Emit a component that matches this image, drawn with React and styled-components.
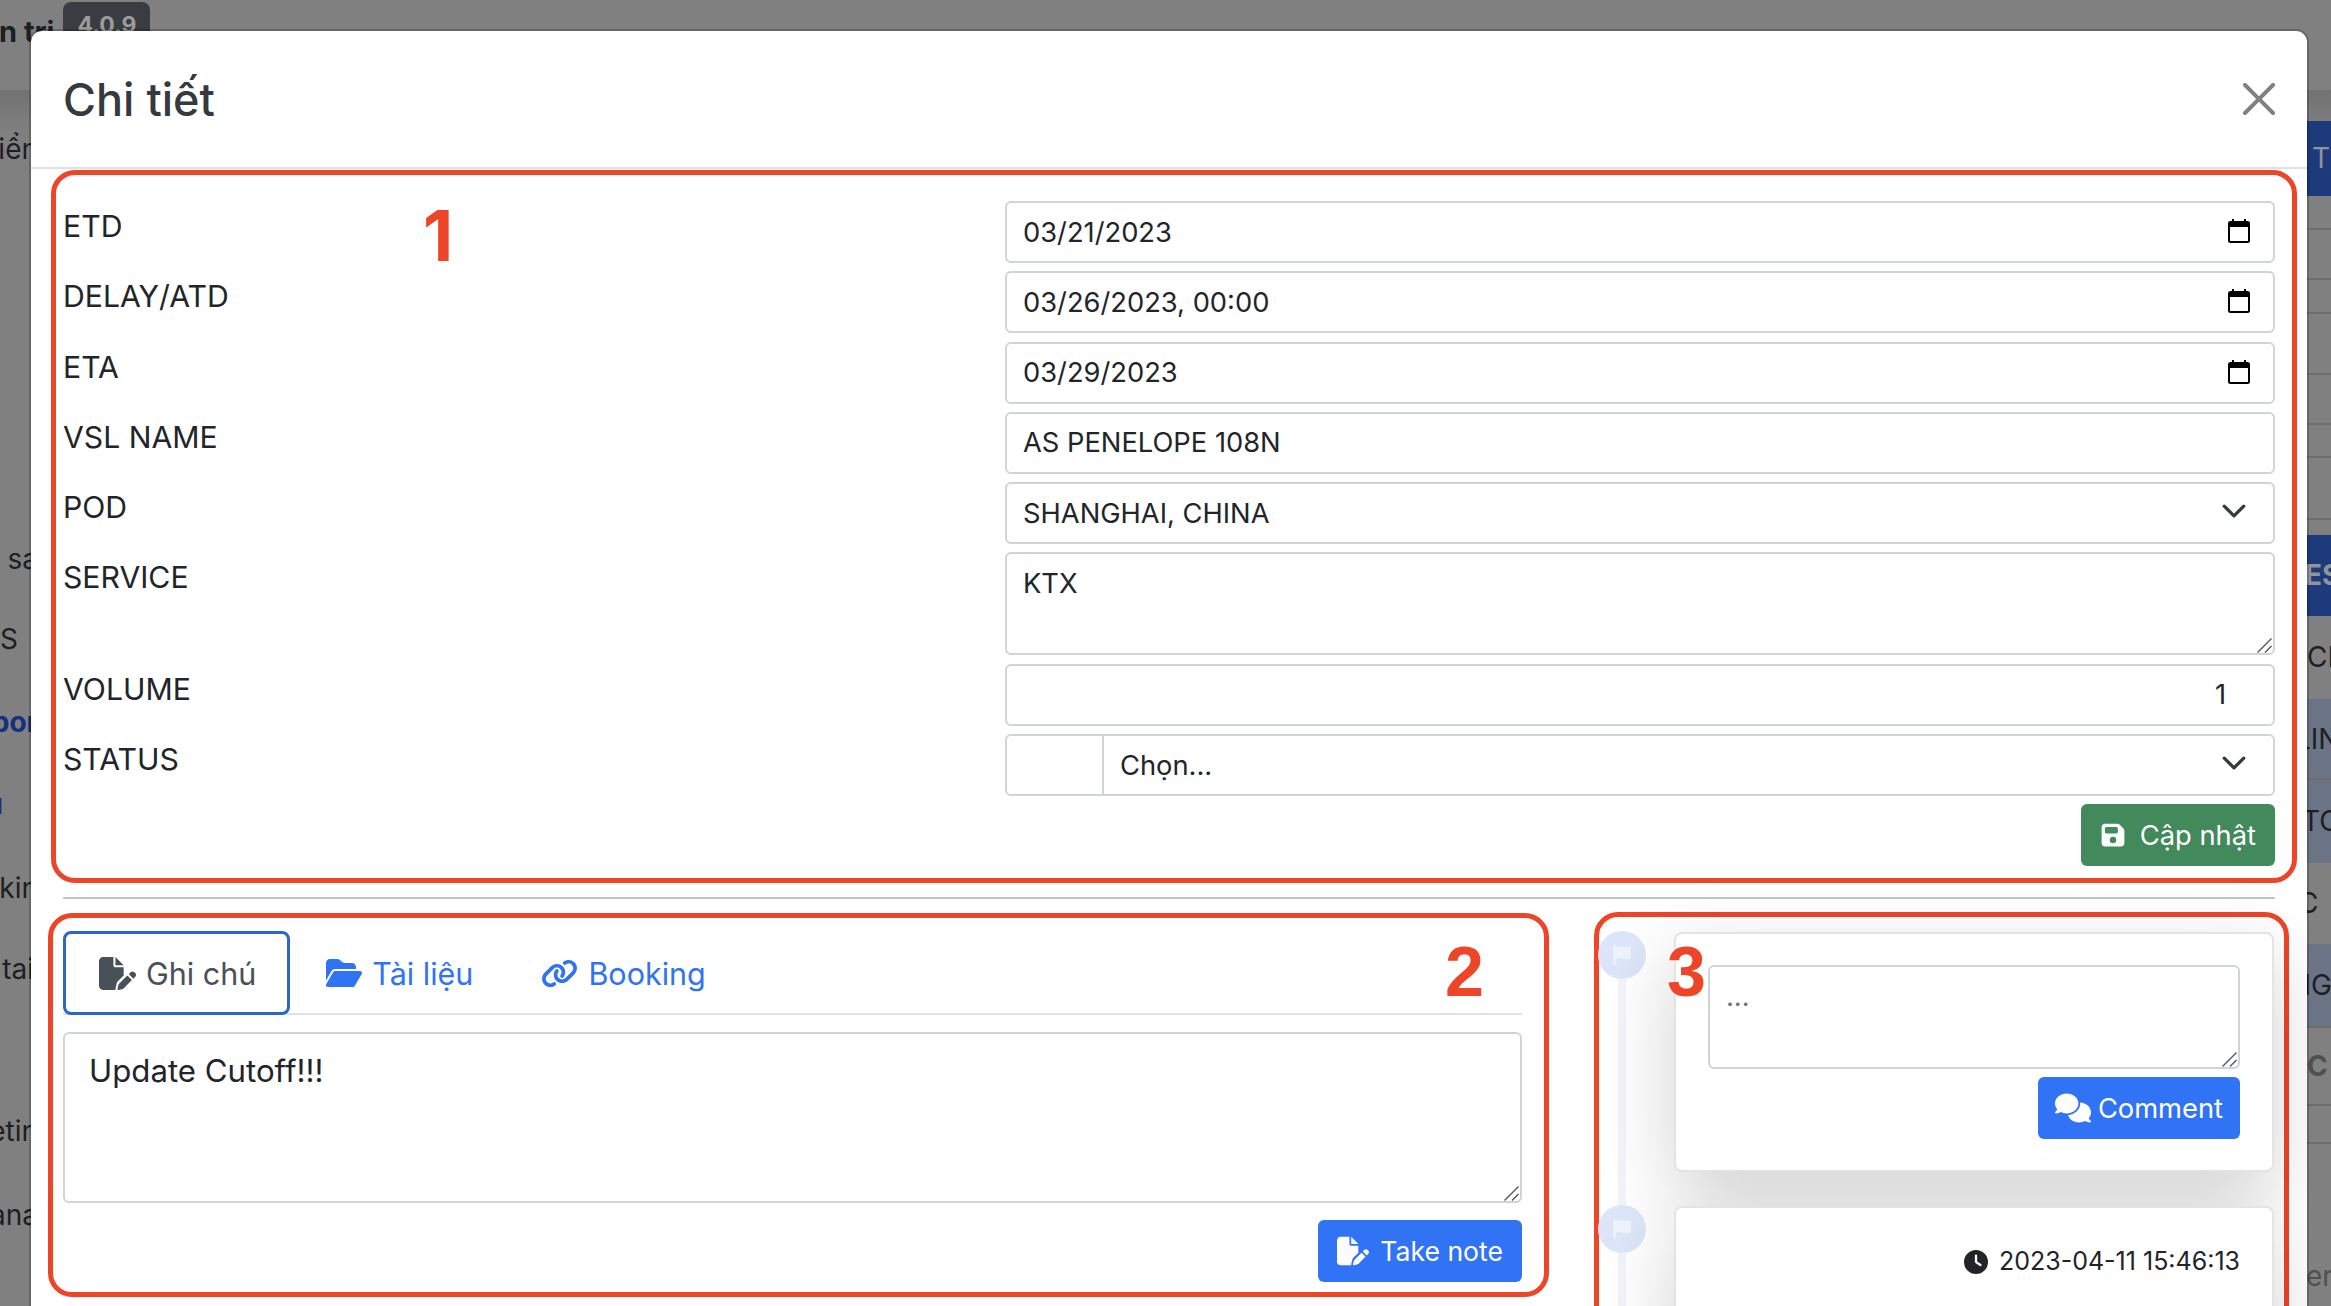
import React from "react";
import styled, { createGlobalStyle } from "styled-components";
import { FaFilePen, FaFolderOpen, FaLink, FaFloppyDisk, FaComments, FaClock, FaFlag } from "react-icons/fa6";

const Global = createGlobalStyle`
  html, body { margin: 0; height: 100%; overflow: hidden; background: #808080; }
  * { box-sizing: border-box; }
  body { font-family: Inter, "Noto Sans", sans-serif; font-size: 27.3px; color: #212529; }
`;

const Page = styled.div`
  position: relative;
  width: 2331px;
  height: 1306px;
  overflow: hidden;
  background: #808080;
`;
const TopBar = styled.div`
  height: 90px;
  display: flex;
  align-items: flex-start;
  gap: 9px;
  margin-left: -1px;
`;
const BrandText = styled.div`
  margin-top: 12px;
  font-size: 29px;
  line-height: 40px;
  font-weight: 700;
  color: #1c1f23;
  white-space: nowrap;
`;
const VersionBadge = styled.div`
  margin-top: 2px;
  width: 87px;
  height: 44px;
  padding-top: 9px;
  border-radius: 8px;
  background: #393c42;
  color: #9c9c9c;
  font-size: 23px;
  font-weight: 700;
  line-height: 28px;
  text-align: center;
`;
const Content = styled.div`
  height: 1216px;
  display: flex;
  justify-content: space-between;
  background: linear-gradient(#727272, #808080 42px) no-repeat;
`;
const LeftStrip = styled.div`
  width: 38px;
  overflow: hidden;
  padding-top: 18px;
  display: flex;
  flex-direction: column;
  font-size: 28px;
`;
const LeftRow = styled.div`
  height: ${(p) => p.$h}px;
  display: flex;
  align-items: center;
  justify-content: flex-end;
  padding-right: ${(p) => p.$pr || 0}px;
  white-space: nowrap;
  font-weight: ${(p) => (p.$link ? 700 : 400)};
  color: ${(p) => (p.$link ? "#15307c" : "#1c1f23")};
`;
const RightStrip = styled.div`
  width: 24px;
  overflow: hidden;
  display: flex;
  flex-direction: column;
  font-size: 28px;
`;
const tones = { none: "transparent", blue: "#1d3a7a", slate: "#6b7485" };
const RightRow = styled.div`
  flex: none;
  height: ${(p) => p.$h}px;
  width: 60px;
  display: flex;
  align-items: ${(p) => (p.$end ? "flex-end" : "center")};
  padding-bottom: ${(p) => (p.$end ? 12 : 0)}px;
  background: ${(p) => tones[p.$tone || "none"]};
  border-bottom: 2px solid ${(p) => (p.$line ? "#6d6d6d" : "transparent")};
  color: ${(p) => (p.$muted ? "#8f939b" : p.$soft ? "#505050" : "#1c1f23")};
  font-weight: ${(p) => (p.$bold ? 700 : 400)};
  white-space: nowrap;
  text-indent: ${(p) => p.$shift || 0}px;
`;

const Modal = styled.div`
  position: absolute;
  left: 29px;
  top: 29px;
  width: 2280px;
  height: 1340px;
  background: #fff;
  background-clip: padding-box;
  border: 2px solid rgba(0, 0, 0, 0.2);
  border-radius: 13px;
  overflow: hidden;
`;
const Header = styled.div`
  height: 138px;
  border-bottom: 2px solid #dee2e6;
  padding: 0 32px;
  display: flex;
  align-items: center;
  justify-content: space-between;
`;
const Title = styled.div`
  font-size: 45px;
  font-weight: 500;
  color: #343a40;
  line-height: 54px;
  margin-top: 2px;
`;
const CloseIcon = styled.svg`
  display: block;
  width: 32px;
  height: 32px;
  fill: #808080;
`;
const RedBox = styled.div`
  position: relative;
  border: 5px solid #ee4427;
  border-radius: 24px;
`;
const Box1 = styled(RedBox)`
  margin: 1px 10px 0 20px;
  height: 713px;
  padding: 26px 17px 0 7px;
`;
const FieldRow = styled.div`
  display: flex;
  align-items: flex-start;
  margin-bottom: 8.3px;
`;
const FieldLabel = styled.div`
  flex: none;
  width: 942px;
  font-size: 30.2px;
  line-height: 39px;
  margin-top: 6px;
`;
const FieldControl = styled.div`
  position: relative;
  flex: 1;
  display: flex;
  min-width: 0;
`;
const controlBase = `
  display: block;
  width: 100%;
  height: 62px;
  border: 2px solid #ced4da;
  border-radius: 6px;
  background: #fff;
  color: #212529;
  font: 400 27.3px/39px Inter, "Noto Sans", sans-serif;
  padding: 10px 16px;
  outline: none;
`;
const TextInput = styled.input`
  ${controlBase}
  text-align: ${(p) => (p.$right ? "right" : "left")};
  padding-right: ${(p) => (p.$right ? 47 : 16)}px;
`;
const SelectBox = styled.select`
  ${controlBase}
  appearance: none;
  border-radius: ${(p) => (p.$joined ? "0 6px 6px 0" : "6px")};
  margin-left: ${(p) => (p.$joined ? "-2px" : "0")};
`;
const Addon = styled.div`
  flex: none;
  width: 99px;
  height: 62px;
  border: 2px solid #ced4da;
  border-radius: 6px 0 0 6px;
`;
const AreaWrap = styled.div`
  position: relative;
  width: 100%;
`;
const TextArea = styled.textarea`
  ${controlBase}
  height: ${(p) => p.$h}px;
  resize: none;
  font-size: ${(p) => p.$fs || 27.3}px;
  line-height: ${(p) => p.$lh || 39}px;
  padding: ${(p) => p.$pad || "10px 16px"};
  &::placeholder { color: #6c757d; opacity: 1; }
`;
const GripIcon = styled.svg`
  position: absolute;
  right: 3px;
  bottom: 2px;
  width: 15px;
  height: 15px;
  stroke: #555;
  stroke-width: 1.4;
  fill: none;
  pointer-events: none;
`;
const CalendarIcon = styled.svg`
  position: absolute;
  right: 25px;
  top: 18px;
  width: 22px;
  height: 24px;
`;
const Chevron = styled.svg`
  position: absolute;
  right: 28px;
  top: 16px;
  width: 26px;
  height: 26px;
  fill: none;
  stroke: #343a40;
  stroke-width: 2;
  stroke-linecap: round;
  stroke-linejoin: round;
`;
const Actions = styled.div`
  display: flex;
  justify-content: flex-end;
  margin-top: ${(p) => p.$mt || 0}px;
`;
const Button = styled.button`
  height: 62px;
  display: inline-flex;
  align-items: center;
  gap: ${(p) => p.$gap}px;
  padding: 0 ${(p) => p.$px}px;
  border: 0;
  border-radius: 6px;
  background: ${(p) => (p.$green ? "#428a5b" : "#3173f5")};
  color: #fff;
  font: 400 ${(p) => p.$fs || 27.3}px/39px Inter, "Noto Sans", sans-serif;
`;
const Divider = styled.div`
  margin: 14px 32px 14px 32px;
  height: 2px;
  background: #c4c4c4;
`;
const LowerRow = styled.div`
  display: flex;
  align-items: flex-start;
  gap: 45px;
  padding-left: 17px;
`;
const Box2 = styled(RedBox)`
  flex: none;
  width: 1501px;
  height: 384px;
  padding: 13px 22px 0 10px;
`;
const Tabs = styled.div`
  display: flex;
  height: 84px;
  border-bottom: 2px solid #dee2e6;
  margin-bottom: 17px;
`;
const Tab = styled.div`
  display: flex;
  align-items: center;
  gap: 10px;
  height: 84px;
  padding: 0 ${(p) => (p.$active ? 31 : 29)}px 0 33px;
  border: 3px solid ${(p) => (p.$active ? "#2a66cc" : "transparent")};
  border-radius: 8px;
  font-size: 30.5px;
  color: ${(p) => (p.$active ? "#495057" : "#3173f5")};
`;
const Box3 = styled(RedBox)`
  flex: none;
  width: 695px;
  height: 520px;
  margin-top: -1px;
  padding: 14px 10px 0 0;
`;
const TimelineItem = styled.div`
  display: flex;
  gap: 28px;
  margin-left: -1px;
`;
const TimeCol = styled.div`
  flex: none;
  width: 48px;
  display: flex;
  flex-direction: column;
  align-items: center;
`;
const FlagDot = styled.div`
  flex: none;
  width: 48px;
  height: 48px;
  border-radius: 50%;
  background: #dce6f8;
  color: #eef3fc;
  display: flex;
  align-items: center;
  justify-content: center;
`;
const TimeLine = styled.div`
  flex: 1;
  width: 8px;
  background: #f1f5fb;
`;
const Card = styled.div`
  flex: 1;
  min-width: 0;
  margin: 1px 0 ${(p) => p.$mb || 0}px;
  height: ${(p) => p.$h}px;
  border: 2px solid #e4e4e4;
  border-radius: 8px;
  background: #fff;
  box-shadow: 0 26px 78px rgba(0, 0, 0, 0.175);
  padding: 31px 32px;
`;
const Stamp = styled.div`
  display: flex;
  justify-content: flex-end;
  align-items: center;
  gap: 11px;
  font-size: 25px;
  line-height: 39px;
  margin-top: 3px;
`;
const Mark = styled.div`
  position: absolute;
  left: ${(p) => p.$x}px;
  top: ${(p) => p.$y}px;
  z-index: 2;
  font: 700 70px/70px ${(p) => (p.$plain ? "Inter" : '"Liberation Sans"')}, Arial, sans-serif;
  color: #ee4427;
`;

const leftRows = [
  { t: "iển", h: 82 },
  { t: "", h: 328 },
  { t: "n sa", h: 82 },
  { t: "S", h: 78, pr: 20 },
  { t: "por", h: 88, link: true },
  { t: "u", h: 76, link: true, pr: 35 },
  { t: "kin", h: 92 },
  { t: "tai", h: 70, pr: 4 },
  { t: "", h: 86 },
  { t: "etin", h: 82 },
  { t: "ana", h: 86 },
];
const rightRows = [
  { h: 31 },
  { h: 75, tone: "blue", t: "T", muted: true, shift: 5 },
  { h: 34, line: true },
  { h: 50, line: true },
  { h: 34, line: true },
  { h: 61, line: true },
  { h: 50, line: true },
  { h: 33, line: true },
  { h: 62, line: true },
  { h: 15 },
  { h: 81, tone: "blue", t: "ES", muted: true, bold: true, shift: -2 },
  { h: 83, t: "CL" },
  { h: 81, tone: "slate", t: "LIN", line: true, shift: -12 },
  { h: 83, tone: "slate", t: "TO", shift: -5 },
  { h: 81, t: "C", shift: -9 },
  { h: 84, tone: "slate", t: "NG", line: true, shift: -17 },
  { h: 78, t: "C", soft: true, bold: true, line: true },
  { h: 38, line: true },
  { h: 163, t: "er", soft: true, end: true, shift: -1 },
];

const Calendar = () => (
  <CalendarIcon viewBox="0 0 22 24">
    <path d="M4 0h2v3H4zM16 0h2v3h-2z" fill="#000" />
    <rect x="1" y="3" width="20" height="20" rx="1.5" fill="none" stroke="#000" strokeWidth="2" />
    <rect x="1" y="3" width="20" height="5" fill="#000" />
  </CalendarIcon>
);
const Caret = () => (
  <Chevron viewBox="0 0 16 16">
    <path d="m2 5 6 6 6-6" />
  </Chevron>
);
const Grip = () => (
  <GripIcon viewBox="0 0 15 15">
    <path d="M0.5 14.5 14.5 0.5M8 14.5 14.5 8" />
  </GripIcon>
);

export default function App() {
  return (
    <Page>
      <Global />
      <TopBar>
        <BrandText>n trị</BrandText>
        <VersionBadge>4.0.9</VersionBadge>
      </TopBar>
      <Content>
        <LeftStrip>
          {leftRows.map((r, i) => (
            <LeftRow key={i} $h={r.h} $link={r.link} $pr={r.pr}>{r.t}</LeftRow>
          ))}
        </LeftStrip>
        <RightStrip>
          {rightRows.map((r, i) => (
            <RightRow key={i} $h={r.h} $tone={r.tone} $line={r.line} $muted={r.muted} $soft={r.soft} $bold={r.bold} $end={r.end} $shift={r.shift}>
              {r.t}
            </RightRow>
          ))}
        </RightStrip>
      </Content>

      <Modal>
        <Header>
          <Title>Chi tiết</Title>
          <CloseIcon viewBox="0 0 16 16">
            <path d="M.293.293a1 1 0 0 1 1.414 0L8 6.586 14.293.293a1 1 0 1 1 1.414 1.414L9.414 8l6.293 6.293a1 1 0 0 1-1.414 1.414L8 9.414l-6.293 6.293a1 1 0 0 1-1.414-1.414L6.586 8 .293 1.707a1 1 0 0 1 0-1.414z" />
          </CloseIcon>
        </Header>

        <Box1>
          <Mark $plain $x={367} $y={26}>1</Mark>
          <FieldRow>
            <FieldLabel>ETD</FieldLabel>
            <FieldControl><TextInput readOnly defaultValue="03/21/2023" /><Calendar /></FieldControl>
          </FieldRow>
          <FieldRow>
            <FieldLabel>DELAY/ATD</FieldLabel>
            <FieldControl><TextInput readOnly defaultValue="03/26/2023, 00:00" /><Calendar /></FieldControl>
          </FieldRow>
          <FieldRow>
            <FieldLabel>ETA</FieldLabel>
            <FieldControl><TextInput readOnly defaultValue="03/29/2023" /><Calendar /></FieldControl>
          </FieldRow>
          <FieldRow>
            <FieldLabel>VSL NAME</FieldLabel>
            <FieldControl><TextInput readOnly defaultValue="AS PENELOPE 108N" /></FieldControl>
          </FieldRow>
          <FieldRow>
            <FieldLabel>POD</FieldLabel>
            <FieldControl>
              <SelectBox defaultValue="sh"><option value="sh">SHANGHAI, CHINA</option></SelectBox>
              <Caret />
            </FieldControl>
          </FieldRow>
          <FieldRow>
            <FieldLabel>SERVICE</FieldLabel>
            <FieldControl>
              <AreaWrap>
                <TextArea $h={103} readOnly defaultValue="KTX" />
                <Grip />
              </AreaWrap>
            </FieldControl>
          </FieldRow>
          <FieldRow>
            <FieldLabel>VOLUME</FieldLabel>
            <FieldControl><TextInput $right readOnly defaultValue="1" /></FieldControl>
          </FieldRow>
          <FieldRow>
            <FieldLabel>STATUS</FieldLabel>
            <FieldControl>
              <Addon />
              <SelectBox $joined defaultValue=""><option value="">Chọn...</option></SelectBox>
              <Caret />
            </FieldControl>
          </FieldRow>
          <Actions>
            <Button $green $gap={14} $px={19}><FaFloppyDisk size={26} />Cập nhật</Button>
          </Actions>
        </Box1>

        <Divider />

        <LowerRow>
          <Box2>
            <Mark $x={1392} $y={19}>2</Mark>
            <Tabs>
              <Tab $active><FaFilePen size={37} />Ghi chú</Tab>
              <Tab><FaFolderOpen size={36} />Tài liệu</Tab>
              <Tab><FaLink size={37} />Booking</Tab>
            </Tabs>
            <AreaWrap>
              <TextArea $h={171} $fs={31.2} $lh={48} $pad="13px 24px" readOnly defaultValue="Update Cutoff!!!" />
              <Grip />
            </AreaWrap>
            <Actions $mt={17}>
              <Button $fs={26.6} $gap={11} $px={19}><FaFilePen size={32} />Take note</Button>
            </Actions>
          </Box2>

          <Box3>
            <Mark $x={68} $y={20}>3</Mark>
            <TimelineItem>
              <TimeCol>
                <FlagDot><FaFlag size={20} /></FlagDot>
                <TimeLine />
              </TimeCol>
              <Card $h={240} $mb={33}>
                <AreaWrap>
                  <TextArea $h={104} placeholder="..." readOnly />
                  <Grip />
                </AreaWrap>
                <Actions $mt={8}>
                  <Button $gap={7} $px={17}><FaComments size={36} />Comment</Button>
                </Actions>
              </Card>
            </TimelineItem>
            <TimelineItem>
              <TimeCol>
                <FlagDot><FaFlag size={20} /></FlagDot>
                <TimeLine />
              </TimeCol>
              <Card $h={300}>
                <Stamp><FaClock size={24} />2023-04-11 15:46:13</Stamp>
              </Card>
            </TimelineItem>
          </Box3>
        </LowerRow>
      </Modal>
    </Page>
  );
}
